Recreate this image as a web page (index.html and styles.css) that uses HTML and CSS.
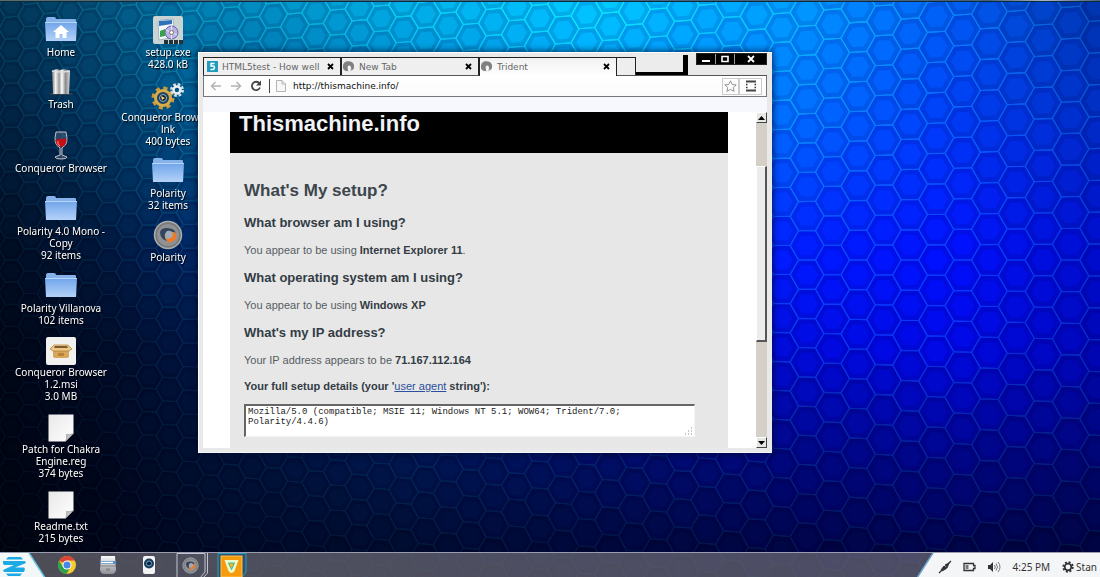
FILE: index.html
```html
<!DOCTYPE html>
<html lang="en">
<head>
<meta charset="utf-8">
<title>Desktop</title>
<link rel="stylesheet" href="styles.css">
</head>
<body>
<svg class="defs" width="0" height="0" aria-hidden="true">
  <defs>
    <linearGradient id="gFolder" x1="0" y1="0" x2="0" y2="1"><stop offset="0" stop-color="#6fa4ea"/><stop offset="1" stop-color="#b4d2f8"/></linearGradient>
    <linearGradient id="gSteel" x1="0" y1="0" x2="1" y2="0"><stop offset="0" stop-color="#777"/><stop offset=".2" stop-color="#f4f4f4"/><stop offset=".4" stop-color="#999"/><stop offset=".55" stop-color="#fff"/><stop offset=".75" stop-color="#8a8a8a"/><stop offset="1" stop-color="#d8d8d8"/></linearGradient>
    <linearGradient id="gDrive" x1="0" y1="0" x2="0" y2="1"><stop offset="0" stop-color="#fafafa"/><stop offset="1" stop-color="#8b9096"/></linearGradient>
    <linearGradient id="gPaper" x1="0" y1="0" x2="1" y2="1"><stop offset="0" stop-color="#e8e8e8"/><stop offset="1" stop-color="#fff"/></linearGradient>
    <symbol id="folder" viewBox="0 0 34 26">
      <path d="M2 3q0-2 2-2h6q2 0 2 2h19q1 0 1 1v6H2z" fill="#85b2ea"/>
      <path d="M1 6h32l-1 19H2z" fill="url(#gFolder)"/>
      <path d="M1 6.500h32" stroke="#b7d5fb" stroke-width="1"/>
    </symbol>
    <symbol id="paper" viewBox="0 0 26 28">
      <path d="M.5.5h25v19l-8 8H.5z" fill="url(#gPaper)"/>
      <path d="M25.500 19.500l-8 8q2-3 1-7 3 1 7-1z" fill="#c4c4c4" stroke="#888" stroke-width=".6"/>
    </symbol>
    <symbol id="polarity" viewBox="0 0 30 30">
      <circle cx="15" cy="15" r="13.500" fill="#77797b" stroke="#a9abad" stroke-width="1.500"/>
      <circle cx="15" cy="15" r="11" fill="#8f9193"/>
      <path d="M7 12q1-4 7-4 8 0 9 6-3-3-7-2-4 1-4 5 0 2 2 4-7-2-7-9z" fill="#34465f"/>
      <path d="M23 13q2 8-6 9l-1 2-2-4q-2-1-2-3 2 2 5 1 4-2 3-6 2 0 3 1z" fill="#f07a24"/>
      <path d="M14 11q5-1 6 3 0 4-5 5-4-1-3-5 1-2 2-3z" fill="#a5aab1"/>
    </symbol>
    <symbol id="swirl" viewBox="0 0 12 12">
      <circle cx="6" cy="5.500" r="5" fill="#b5b5b5"/>
      <path d="M3 10A5 5 0 0 1 6 .5q5 0 5 5 0 2-1 3L8.500 9 8 6Q7 3 5 5 3 7 6 10z" fill="#808080"/>
      <path d="M5 5q3-1 3 2l-1 4-2-1z" fill="#f4f4f4"/>
    </symbol>
    <symbol id="cross" viewBox="0 0 7 7"><path d="M1 1l5 5M6 1L1 6" stroke="#000" stroke-width="1.800"/></symbol>
  </defs>
</svg>

<canvas class="wallpaper" id="wallpaper" aria-hidden="true"></canvas>
<div class="screen">
  <div class="sliver"></div>
  <main class="desktop">
    <a href="#home" class="shortcut col-a home">
      <svg class="pic" width="34" height="26"><use href="#folder"/><path d="M17 9l-8 7h2.500v6h4v-4h3v4h4v-6H25z" fill="#fff"/></svg>
      <span>Home</span>
    </a>
    <a href="#trash" class="shortcut col-a trash">
      <svg class="pic" width="24" height="28" viewBox="0 0 24 28"><path d="M0 25h24l-2 2H2z" fill="#444" opacity=".7"/><path d="M3 3q4-3 8-1 6-2 10 1l-1 23H4z" fill="url(#gSteel)"/><path d="M3 3q9 2 18 0" fill="none" stroke="#ddd" stroke-width="1.500"/></svg>
      <span>Trash</span>
    </a>
    <a href="#conqueror" class="shortcut col-a wine">
      <svg class="pic" width="18" height="30" viewBox="0 0 18 30"><path d="M4 2h10q3 12-3 15l-1 1v7l5 2q0 2-6 2t-6-2l5-2v-7l-1-1Q1 14 4 2z" fill="#7785a0" fill-opacity=".35" stroke="#c9c1c6" stroke-width="1"/><path d="M3.500 10q5-2 11-1 0 7-5.500 8-5-1-5.500-7z" fill="#c40f14"/><path d="M6 11q-1 3 2 5" stroke="#f99" fill="none"/></svg>
      <span>Conqueror Browser</span>
    </a>
    <a href="#mono" class="shortcut col-a mono">
      <svg class="pic" width="34" height="26"><use href="#folder"/></svg>
      <span>Polarity 4.0 Mono -<br>Copy</span><span>92 items</span>
    </a>
    <a href="#villanova" class="shortcut col-a villanova">
      <svg class="pic" width="34" height="26"><use href="#folder"/></svg>
      <span>Polarity Villanova</span><span>102 items</span>
    </a>
    <a href="#msi" class="shortcut col-a msi tight">
      <svg class="pic" width="30" height="28" viewBox="0 0 30 28"><rect width="30" height="28" rx="2" fill="#f1f1ef"/><path d="M7 13h16v7l-2 1H9l-2-1z" fill="#d9a75a"/><path d="M8 8h14l4 4-3 2H7l-3-2z" fill="#edc88b" stroke="#b07c32" stroke-width=".7"/><path d="M9 9h12l1 2H8z" fill="#7d5a2a"/><path d="M12 16h6v3h-6z" fill="#b98439"/></svg>
      <span>Conqueror Browser<br>1.2.msi</span><span>3.0 MB</span>
    </a>
    <a href="#patch" class="shortcut col-a patch tight">
      <svg class="pic" width="26" height="28"><use href="#paper"/></svg>
      <span>Patch for Chakra<br>Engine.reg</span><span>374 bytes</span>
    </a>
    <a href="#readme" class="shortcut col-a readme tight">
      <svg class="pic" width="26" height="28"><use href="#paper"/></svg>
      <span>Readme.txt</span><span>215 bytes</span>
    </a>

    <a href="#setup" class="shortcut col-b setup tight">
      <svg class="pic" width="30" height="29" viewBox="0 0 30 29"><rect width="30" height="28" rx="2" fill="#c9d4d4"/><path d="M5 6l3-2 12-1 2 18-16 3z" fill="#f6f9fb" stroke="#8ba0ae" stroke-width=".7"/><path d="M6 5l13-1v4L6 10z" fill="#2d72bb"/><path d="M7 15l5-2v7l-5 1z" fill="#36a348"/><circle cx="18.500" cy="16.500" r="6.500" fill="#b9b0e6" stroke="#6c68a6"/><path d="M18.500 10v13M13 14l11 5" stroke="#e8e6ff"/><circle cx="18.500" cy="16.500" r="2" fill="#fff" stroke="#776"/><path d="M11 26h19" stroke="#26313a" stroke-width="4" stroke-dasharray="4 1"/></svg>
      <span>setup.exe</span><span>428.0 kB</span>
    </a>
    <a href="#link" class="shortcut col-b link tight">
      <svg class="pic" width="34" height="28" viewBox="0 0 34 28"><circle cx="12" cy="16" r="9.500" fill="none" stroke="#c99a3a" stroke-width="4" stroke-dasharray="4 3.460"/><circle cx="12" cy="16" r="7.500" fill="#1a4263" stroke="#d9ab48" stroke-width="3"/><circle cx="12" cy="16" r="3.500" fill="#0d2033" stroke="#98b8cc"/><path d="M10 14l4 2-3 2z" fill="#ffd76a"/><circle cx="26" cy="8" r="5.500" fill="none" stroke="#d4dde4" stroke-width="3" stroke-dasharray="2.500 1.820"/><circle cx="26" cy="8" r="3.500" fill="none" stroke="#e9eef2" stroke-width="2.500"/></svg>
      <span class="cut">Conqueror Brow</span><span>lnk</span><span>400 bytes</span>
    </a>
    <a href="#folder-polarity" class="shortcut col-b pfolder">
      <svg class="pic" width="34" height="26"><use href="#folder"/></svg>
      <span>Polarity</span><span>32 items</span>
    </a>
    <a href="#polarity-app" class="shortcut col-b papp tight">
      <svg class="pic" width="30" height="30"><use href="#polarity"/></svg>
      <span>Polarity</span>
    </a>

    <section class="window" aria-label="Browser">
      <div class="tabstrip">
        <div class="tab">
          <svg width="11" height="11" viewBox="0 0 11 11"><rect width="11" height="11" fill="#1e9bbd"/><path d="M7.500 2.500h-3.500v2.500h2q1.500 0 1.500 1.500T6 8.500H3.500" fill="none" stroke="#fff" stroke-width="1.400"/></svg>
          <span>HTML5test - How well</span>
          <button aria-label="Close HTML5test"><svg width="7" height="7"><use href="#cross"/></svg></button>
        </div>
        <div class="tab">
          <svg width="12" height="12"><use href="#swirl"/></svg>
          <span>New Tab</span>
          <button aria-label="Close New Tab"><svg width="7" height="7"><use href="#cross"/></svg></button>
        </div>
        <div class="tab active">
          <svg width="12" height="12"><use href="#swirl"/></svg>
          <span>Trident</span>
          <button aria-label="Close Trident"><svg width="7" height="7"><use href="#cross"/></svg></button>
        </div>
        <button class="newtab" aria-label="New tab"></button>
        <div class="dropbox"></div>
        <div class="controls">
          <button aria-label="Minimize"><svg width="10" height="8"><path d="M1 6h8" stroke="#fff" stroke-width="2"/></svg></button>
          <button aria-label="Maximize"><svg width="10" height="8"><path d="M2 1.500h6v5H2z" fill="none" stroke="#fff" stroke-width="1.600"/></svg></button>
          <button class="wide" aria-label="Close"><svg width="10" height="8"><path d="M2 1l6 6M8 1L2 7" stroke="#fff" stroke-width="1.800"/></svg></button>
        </div>
      </div>
      <div class="toolbar">
        <button aria-label="Back"><svg width="12" height="10" viewBox="0 0 12 10"><path d="M11 5H2M5.500 1L1.500 5l4 4" fill="none" stroke="#b3b3b3" stroke-width="1.500"/></svg></button>
        <button aria-label="Forward"><svg width="12" height="10" viewBox="0 0 12 10"><path d="M1 5h9M6.500 1l4 4-4 4" fill="none" stroke="#b3b3b3" stroke-width="1.500"/></svg></button>
        <button aria-label="Reload"><svg width="12" height="12" viewBox="0 0 12 12"><path d="M9.500 3.500A4.200 4.200 0 1 0 10 7.500" fill="none" stroke="#444" stroke-width="1.800"/><path d="M11 .5v5H6z" fill="#444"/></svg></button>
        <i class="divider"></i>
        <svg class="doc" width="10" height="12" viewBox="0 0 10 12"><path d="M.5.5h5.500l3.500 3.500v7.500h-9zM6 .5V4h3.500" fill="#f7f7f7" stroke="#b5b5b5"/></svg>
        <input type="text" aria-label="Address" value="http://thismachine.info/">
        <button class="boxed" aria-label="Bookmark"><svg width="13" height="12" viewBox="0 0 13 12"><path d="M6.500.8l1.700 3.700 4 .4-3 2.600.9 3.900-3.600-2-3.600 2 .9-3.900-3-2.600 4-.4z" fill="#fff" stroke="#888" stroke-width=".9"/></svg></button>
        <button class="boxed menu" aria-label="Menu"><svg width="12" height="12" viewBox="0 0 12 12"><path d="M1 1.500h10M1 10.500h10" stroke="#444" stroke-width="1.800"/><path d="M1 4.500h1.500M9.500 4.500H11M1 7.500h1.500M9.500 7.500H11" stroke="#333" stroke-width="1.500"/></svg></button>
      </div>
      <div class="bookmarks"></div>
      <div class="viewport">
        <article class="page">
          <header><h1>Thismachine.info</h1></header>
          <div class="content">
            <h2>What's My setup?</h2>
            <h3>What browser am I using?</h3>
            <p>You appear to be using <strong>Internet Explorer 11</strong>.</p>
            <h3>What operating system am I using?</h3>
            <p>You appear to be using <strong>Windows XP</strong></p>
            <h3>What's my IP address?</h3>
            <p>Your IP address appears to be <strong>71.167.112.164</strong></p>
            <p class="details"><label for="ua">Your full setup details (your '</label><a href="#ua">user agent</a><label for="ua"> string'):</label></p>
            <div class="agent">
              <textarea id="ua" rows="3" spellcheck="false">Mozilla/5.0 (compatible; MSIE 11; Windows NT 5.1; WOW64; Trident/7.0;
Polarity/4.4.6)</textarea>
              <svg class="grip" width="8" height="8" aria-hidden="true"><path d="M6 1h1M3 4h1M6 4h1M0 7h1M3 7h1M6 7h1" stroke="#888" stroke-width="1"/></svg>
            </div>
          </div>
        </article>
        <div class="scrollbar">
          <button aria-label="Scroll up"><svg width="7" height="4"><path d="M3.500 0L7 4H0z"/></svg></button>
          <div class="track"><div class="thumb"></div></div>
          <button aria-label="Scroll down"><svg width="7" height="4"><path d="M0 0h7L3.500 4z"/></svg></button>
        </div>
      </div>
    </section>
  </main>

  <footer class="taskbar">
    <button class="start" aria-label="Start menu"><svg width="46" height="25" viewBox="0 0 46 25"><path d="M0 0h29l16 25H0z" fill="#f4f7f8"/><path d="M29 0l16 25" stroke="#6cc9e8" stroke-width="1.500"/><path d="M8 4h13l2 2.500H6zM3 8h22l1 2-11 4.500H24l1 1.500-1 3H4l-1-2 11-5H4l-1-1.500zM6 20.500h16l-2 2.500H8z" fill="#1caae4"/></svg></button>
    <button class="task" aria-label="Chrome"><svg width="20" height="20" viewBox="0 0 20 20"><circle cx="10" cy="10" r="9" fill="#f7ca2d"/><path d="M10 10L2.200 5.500A9 9 0 0 1 17.800 5.500H10z" fill="#dc4437"/><path d="M2.200 5.500A9 9 0 0 0 9.500 19l4-7L6 12z" fill="#2ba24c"/><circle cx="10" cy="10" r="4.500" fill="#fff"/><circle cx="10" cy="10" r="3.500" fill="#4688e8"/></svg></button>
    <button class="task" aria-label="Files"><svg width="18" height="20" viewBox="0 0 18 20"><path d="M2 1h14l1 14q-1 4-4 4H5q-3 0-4-4z" fill="url(#gDrive)"/><path d="M1.500 6h15v3h-15z" fill="#568fc4"/><path d="M2 7.500h12" stroke="#fff" stroke-width="1.500"/><path d="M1 11h16M7 14h4l-2 2z" stroke="#777" fill="none" stroke-width=".8"/></svg></button>
    <button class="task" aria-label="Player"><svg width="12" height="18" viewBox="0 0 12 18"><rect width="12" height="18" rx="2" fill="#f3f3f3"/><circle cx="6" cy="7.500" r="5" fill="#173d5c"/><circle cx="6" cy="7.500" r="2.500" fill="#0a1b2d" stroke="#69a5cf"/></svg></button>
    <button class="task open" aria-label="Polarity"><svg width="33" height="25" viewBox="0 0 33 25"><path d="M1 25V.5h28V19l-5 6" fill="none" stroke="#c3c4d0"/><path d="M31.500 0v20L27 25" fill="none" stroke="#c3c4d0"/><use href="#polarity" x="6" y="4" width="17" height="17"/></svg></button>
    <button class="task open" aria-label="Orange app"><svg width="33" height="25" viewBox="0 0 33 25"><path d="M1 25V.5h28V19l-5 6" fill="#31526b" stroke="#2a9bc4"/><rect x="4" y="3" width="21" height="21" fill="#f79b0e" stroke="#ffc04e"/><path d="M7.500 7h14l-4 11q-3 4-6 0z" fill="#eafcc9"/><path d="M11.500 10h6l-3 6.500z" fill="#f7b321" stroke="#3db9a6"/></svg></button>
    <div class="tray">
      <svg class="tray-edge" viewBox="0 0 17 25" width="17" height="25"><path d="M16 0L0 25h17V0z" fill="#f4f5f7"/><path d="M16 0L0 25" stroke="#6ba6cf" stroke-width="1.500"/></svg>
      <div class="tray-body">
        <svg class="plug" width="14" height="14" viewBox="0 0 14 14"><path d="M1 13l3-3M9 5l4-4" stroke="#333" stroke-width="1.300"/><path d="M3 10l3-4 2.500 2.500L4 11zM7 5l4-2-2 5z" fill="#333" stroke="#333"/></svg>
        <svg class="battery" width="13" height="10" viewBox="0 0 13 10"><path d="M1 1.500h9.500v2H12v3h-1.500v2H1z" fill="none" stroke="#333" stroke-width="1.300"/><path d="M2.500 3h3v4h-3z" fill="#777"/></svg>
        <svg class="sound" width="14" height="12" viewBox="0 0 14 12"><path d="M1 4h2l3-3v10L3 8H1z" fill="#333"/><path d="M7.500 4q1.500 2 0 4M9 2.500q3 3.500 0 7M11 1q4 5 0 10" fill="none" stroke="#777"/></svg>
        <time>4:25 PM</time>
        <button class="user"><svg width="12" height="12" viewBox="0 0 12 12"><circle cx="6" cy="6" r="4.700" fill="none" stroke="#333" stroke-width="2" stroke-dasharray="2 1.690"/><circle cx="6" cy="6" r="3.300" fill="none" stroke="#333" stroke-width="1.700"/></svg>Stan</button>
      </div>
    </div>
  </footer>
</div>
<script src="wallpaper.js"></script>
</body>
</html>
```
FILE: styles.css
```css
* { box-sizing: border-box; }
html, body { height: 100%; margin: 0; }
body { background: #000a40; overflow: hidden; font-family: "Noto Sans", "Open Sans", sans-serif; font-size: 10px; }
button { margin: 0; padding: 0; border: 0; background: none; font: inherit; color: inherit; display: flex; align-items: center; justify-content: center; flex: none; }
svg { display: block; flex: none; }
.defs { position: absolute; }
.wallpaper { position: fixed; inset: 0; width: 100%; height: 100%; }
.screen { position: relative; height: 100%; display: flex; flex-direction: column; }
.sliver { height: 2px; flex: none; background: linear-gradient(90deg, #5c6c6a, #44687e 40%, #4a6078 90%, #a8b4c4 95%, #4a6078); border-bottom: 1px solid #0b2b40; }
.desktop { position: relative; flex: 1; min-height: 0; }

/* Shortcuts on the desktop */
.shortcut { position: absolute; width: 110px; display: flex; flex-direction: column; align-items: center; text-align: center; color: #fff; text-decoration: none; line-height: 12px; text-shadow: 1px 1px 1px #000; white-space: nowrap; }
.pic { margin-bottom: 4px; }
.tight .pic { margin-bottom: 1px; }
.cut { padding-right: 16px; }
.col-a { left: 6px; }
.col-b { left: 113px; }
.home { top: 14px; }
.trash { top: 66px; }
.trash .pic, .wine .pic { margin-bottom: 2px; }
.wine { top: 128px; }
.mono { top: 193px; }
.villanova { top: 270px; }
.msi { top: 335px; }
.patch { top: 412px; }
.readme { top: 489px; }
.setup { top: 14px; }
.link { top: 80px; }
.pfolder { top: 155px; }
.papp { top: 218px; }

/* Browser window */
.window { position: absolute; left: 18%; width: 52.2%; top: 50px; bottom: 99px; display: flex; flex-direction: column; padding: 0 5px 4px 4px; background: #e9e9e9; border-top: 1px solid #fff; border-left: 1px solid #fff; border-bottom: 1px solid #f5f7ff; box-shadow: 0 0 7px 1px rgba(0, 10, 40, .7); font-family: "DejaVu Sans", sans-serif; font-size: 9px; }
.tabstrip { display: flex; flex: none; height: 23px; align-items: flex-end; border-bottom: 1px solid #555; }
.tab { flex: 0 1 138px; height: 18px; display: flex; align-items: center; gap: 4px; padding: 0 6px 0 3px; border: 1px solid #222; border-bottom: 0; background: #efefef; color: #666; white-space: nowrap; min-width: 0; }
.tab span { flex: 1; overflow: hidden; }
.tab + .tab { padding-left: 1px; }
.tab.active { background: linear-gradient(#f1f1f1, #fff); height: 19px; margin-bottom: -1px; padding-bottom: 1px; }
.newtab { width: 19px; height: 18px; border: 1px solid #222; border-bottom: 0; border-left: 0; background: #eee; }
.dropbox { width: 52px; height: 20px; border-right: 5px solid #000; border-bottom: 3px solid #000; background: #ececec; }
.controls { margin-left: auto; align-self: flex-start; display: flex; height: 12px; background: #000; border: 1px solid #222; }
.controls button { width: 19px; border-right: 1px solid #999; }
.controls .wide { width: 31px; border-right: 0; }
.toolbar { display: flex; flex: none; height: 21px; align-items: center; gap: 8px; padding: 0 4px 0 6px; background: linear-gradient(#fff, #fbfbfb); border: 1px solid #777; border-top: 0; }
.divider { width: 1px; height: 14px; background: #444; margin-left: -1px; }
.doc { margin: 0 -1px 0 -2px; }
.toolbar input { flex: 1; min-width: 0; border: 0; padding: 0; background: none; outline: 0; font: inherit; color: #111; }
.boxed { width: 17px; height: 17px; border: 1px solid #ccc; }
.boxed.menu { width: 23px; margin-left: -8px; }
.bookmarks { flex: none; height: 15px; background: #f7f8fe; }
.viewport { flex: 1; min-height: 0; display: flex; overflow: hidden; background: #fff; }
.page { flex: 1; margin: 0 28px 0 27px; background: #e7e7e7; color: #555d64; font-family: "Liberation Sans", Arial, sans-serif; font-size: 11px; line-height: 14px; overflow: hidden; }
.page header { height: 41px; padding: 0 9px; background: #000; }
.page h1, .page h2, .page h3, .page p { margin: 0; }
.page h1 { font-size: 22px; line-height: 24px; color: #f0f3f5; }
.content { padding: 28px 33px 0 14px; }
.page h2 { font-size: 17px; line-height: 20px; color: #3d464d; }
.page h3 { margin-top: 13px; font-size: 13px; line-height: 16px; color: #333c44; }
.page h2 + h3 { margin-top: 14px; }
.page p { margin-top: 12px; }
.page strong, .page .details { color: #333c44; font-weight: bold; }
.details a { color: #2b4f9c; font-weight: normal; }
.agent { position: relative; margin-top: 11px; }
.agent textarea { display: block; width: 100%; height: 33px; padding: 1px 2px; resize: none; overflow: hidden; border: 1px solid #f4f4f4; border-top: 2px solid #666; border-left: 2px solid #666; background: #fff; color: #222; font-family: "Liberation Mono", monospace; font-size: 9px; line-height: 10px; }
.grip { position: absolute; right: 2px; bottom: 2px; }
.scrollbar { width: 11px; flex: none; display: flex; flex-direction: column; background: #d4d0c8; }
.scrollbar button { height: 11px; background: #e8e6e2; border: 1px solid #fff; border-right-color: #444; border-bottom-color: #444; }
.track { flex: 1; padding-top: 43px; }
.thumb { height: 65%; max-height: 177px; min-height: 56%; background: #ececec; border: 1px solid #fff; border-right: 2px solid #555; border-bottom: 2px solid #555; }

/* Taskbar */
.taskbar { flex: none; height: 25px; display: flex; background: rgba(118, 117, 124, .65); border-top: 1px solid #9a9caf; color: #333; }
.taskbar .start { width: 46px; }
.task { width: 41px; }
.task.open { align-items: flex-start; padding-left: 5px; }
.tray { margin-left: auto; display: flex; }
.tray-body { display: flex; align-items: center; padding: 3px 3px 0 4px; background: #f4f5f7; white-space: nowrap; }
.battery { margin-left: 11px; }
.sound { margin-left: 11px; }
.tray time { margin-left: 12px; }
.user { margin-left: 12px; gap: 2px; }
```
FILE: wallpaper.js
```js
(function () {
  var canvas = document.getElementById('wallpaper');
  var W = 1100, H = 577;
  var xs = [0, 100, 200, 400, 600, 800, 950, 1100];
  var ys = [0, 100, 250, 350, 460, 577];
  var mesh = [
    [[2,48,82],[3,75,120],[0,120,175],[0,165,225],[0,190,255],[0,145,255],[0,90,240],[0,48,170]],
    [[2,32,66],[1,55,100],[0,88,145],[0,120,200],[0,140,245],[0,108,255],[0,60,240],[0,44,190]],
    [[0,10,32],[0,20,58],[0,35,100],[0,50,170],[0,40,225],[0,24,255],[0,14,250],[0,10,200]],
    [[0,5,22],[0,10,38],[0,18,66],[0,24,120],[0,14,180],[0,8,215],[0,6,225],[0,4,175]],
    [[0,3,18],[0,5,28],[0,13,48],[0,20,76],[0,12,98],[0,4,125],[0,3,130],[0,3,110]],
    [[0,2,14],[0,2,22],[0,5,32],[0,6,36],[0,4,44],[0,2,50],[0,2,55],[0,2,48]]
  ];
  function find(a, v) {
    for (var i = 0; i < a.length - 2; i++) if (v < a[i + 1]) break;
    return [i, Math.max(0, Math.min(1, (v - a[i]) / (a[i + 1] - a[i])))];
  }
  function shade(x, y) {
    var p = find(xs, x), q = find(ys, y);
    return [0, 1, 2].map(function (k) {
      var t = mesh[q[0]][p[0]][k] * (1 - p[1]) + mesh[q[0]][p[0] + 1][k] * p[1];
      var b = mesh[q[0] + 1][p[0]][k] * (1 - p[1]) + mesh[q[0] + 1][p[0] + 1][k] * p[1];
      return t * (1 - q[1]) + b * q[1];
    });
  }
  function css(c) { return 'rgb(' + c.map(function (v) { return Math.min(255, Math.round(v)); }).join(',') + ')'; }
  function size(x) { return 22 + 0.009 * x; }
  /* Column u has its centre at x = 807 for u = 0; cells grow to the right. */
  function px(u) { var h = size(807); return 807 + (h / 0.009) * (Math.exp(0.866 * 0.009 * u) - 1); }
  function point(u, v) { var x = px(u); return [x, 260 + v * size(x)]; }
  function hex(ctx, u, v, s) {
    var c = [[-2/3, 0], [-1/3, -0.5], [1/3, -0.5], [2/3, 0], [1/3, 0.5], [-1/3, 0.5]];
    ctx.beginPath();
    c.forEach(function (d) { var p = point(u + d[0] * s, v + d[1] * s); ctx.lineTo(p[0], p[1]); });
    ctx.closePath();
  }
  function draw() {
    canvas.width = window.innerWidth;
    canvas.height = window.innerHeight;
    var ctx = canvas.getContext('2d');
    ctx.scale(canvas.width / W, canvas.height / H);
    for (var u = -40; u < 16; u++) {
      for (var k = -14; k < 18; k++) {
        var v = k + (Math.abs(u) % 2 ? 0 : 0.5);
        var p = point(u, v);
        var c = shade(p[0], p[1]);
        hex(ctx, u, v, 1.03);
        ctx.fillStyle = css(c.map(function (n) { return n * 0.94; }));
        ctx.fill();
        hex(ctx, u, v, 0.66);
        ctx.fillStyle = css([c[0], c[1] * 1.06 + 2, c[2] * 1.03]);
        ctx.fill();
      }
    }
    for (u = -40; u < 16; u++) {
      for (k = -14; k < 18; k++) {
        v = k + (Math.abs(u) % 2 ? 0 : 0.5);
        p = point(u, v);
        c = shade(p[0], p[1]);
        var g = c[2] / 255;
        hex(ctx, u, v, 1);
        ctx.strokeStyle = css([c[0] + 12 * g, c[1] + 8 + 44 * g, c[2] + 12 + 12 * g]);
        ctx.lineWidth = 1.1;
        ctx.stroke();
      }
    }
  }
  draw();
  window.addEventListener('resize', draw);
})();
```
